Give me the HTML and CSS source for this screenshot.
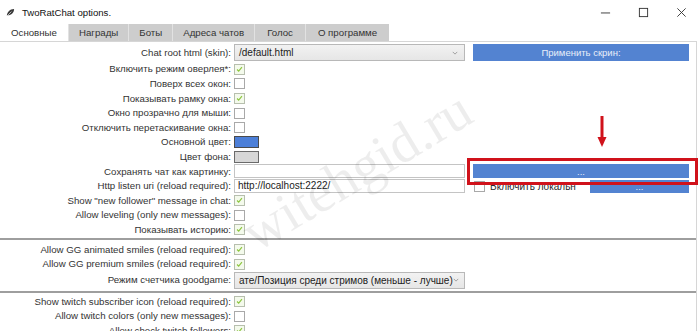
FILE: index.html
```html
<!DOCTYPE html>
<html lang="ru">
<head>
<meta charset="utf-8">
<title>TwoRatChat options.</title>
<link rel="stylesheet" href="styles.css">
</head>
<body>
<div class="window">
  <header class="titlebar">
    <svg class="app-icon" viewBox="0 0 10 10"><path d="M1 9 C1 5 4 1 9 1 C9 5 6 8 2 8 Z" fill="#3a3a3a"/><path d="M1 9 L6 4" stroke="#fff" stroke-width="0.7"/></svg>
    <span class="title">TwoRatChat options.</span>
    <div class="controls">
      <span class="ctl"><svg viewBox="0 0 12 12"><path d="M1 6.5 H11" stroke="#333" stroke-width="1"/></svg></span>
      <span class="ctl"><svg viewBox="0 0 12 12"><rect x="1.5" y="1.5" width="9" height="9" fill="none" stroke="#333" stroke-width="1"/></svg></span>
      <span class="ctl"><svg viewBox="0 0 12 12"><path d="M1.5 1.5 L10.5 10.5 M10.5 1.5 L1.5 10.5" stroke="#333" stroke-width="1"/></svg></span>
    </div>
  </header>

  <nav class="tabs">
    <div class="tab active">Основные</div>
    <div class="tab">Награды</div>
    <div class="tab">Боты</div>
    <div class="tab">Адреса чатов</div>
    <div class="tab tab-wide">Голос</div>
    <div class="tab tab-wide">О программе</div>
  </nav>

  <main class="panel">
    <div class="row tall">
      <span class="lbl">Chat root html (skin):</span>
      <div class="select"><span class="sel-text">/default.html</span><svg class="chev" viewBox="0 0 8 5"><path d="M1 1 L4 4 L7 1" fill="none" stroke="#888" stroke-width="1"/></svg></div>
      <div class="side"><span class="btn full">Применить скрин:</span></div>
    </div>
    <div class="row"><span class="lbl">Включить режим оверлея*:</span><span class="cb on"><svg viewBox="0 0 11 11"><path d="M2.5 5.5 L4.5 7.5 L8.5 2.5" fill="none" stroke="#8cc63f" stroke-width="1.4"/></svg></span></div>
    <div class="row"><span class="lbl">Поверх всех окон:</span><span class="cb"></span></div>
    <div class="row"><span class="lbl">Показывать рамку окна:</span><span class="cb on"><svg viewBox="0 0 11 11"><path d="M2.5 5.5 L4.5 7.5 L8.5 2.5" fill="none" stroke="#8cc63f" stroke-width="1.4"/></svg></span></div>
    <div class="row"><span class="lbl">Окно прозрачно для мыши:</span><span class="cb"></span></div>
    <div class="row"><span class="lbl">Отключить перетаскивание окна:</span><span class="cb"></span></div>
    <div class="row"><span class="lbl">Основной цвет:</span><span class="swatch blue"></span></div>
    <div class="row"><span class="lbl">Цвет фона:</span><span class="swatch gray"></span></div>
    <div class="row"><span class="lbl">Сохранять чат как картинку:</span><span class="input"></span>
      <div class="side"><span class="btn full slim">...</span></div>
    </div>
    <div class="row"><span class="lbl">Http listen uri (reload required):</span><span class="input">http://localhost:2222/</span>
      <div class="side local"><span class="cb"></span><span class="local-text">Включить локальн</span><span class="btn small">...</span></div>
    </div>
    <div class="row"><span class="lbl">Show "new follower" message in chat:</span><span class="cb on"><svg viewBox="0 0 11 11"><path d="M2.5 5.5 L4.5 7.5 L8.5 2.5" fill="none" stroke="#8cc63f" stroke-width="1.4"/></svg></span></div>
    <div class="row"><span class="lbl">Allow leveling (only new messages):</span><span class="cb"></span></div>
    <div class="row"><span class="lbl">Показывать историю:</span><span class="cb on"><svg viewBox="0 0 11 11"><path d="M2.5 5.5 L4.5 7.5 L8.5 2.5" fill="none" stroke="#8cc63f" stroke-width="1.4"/></svg></span></div>

    <div class="sep sep-a"></div>

    <div class="row"><span class="lbl">Allow GG animated smiles (reload required):</span><span class="cb on"><svg viewBox="0 0 11 11"><path d="M2.5 5.5 L4.5 7.5 L8.5 2.5" fill="none" stroke="#8cc63f" stroke-width="1.4"/></svg></span></div>
    <div class="row"><span class="lbl">Allow GG premium smiles (reload required):</span><span class="cb on"><svg viewBox="0 0 11 11"><path d="M2.5 5.5 L4.5 7.5 L8.5 2.5" fill="none" stroke="#8cc63f" stroke-width="1.4"/></svg></span></div>
    <div class="row tall2">
      <span class="lbl">Режим счетчика goodgame:</span>
      <div class="select"><span class="sel-text">ате/Позиция среди стримов (меньше - лучше)</span><svg class="chev" viewBox="0 0 8 5"><path d="M1 1 L4 4 L7 1" fill="none" stroke="#888" stroke-width="1"/></svg></div>
    </div>

    <div class="sep sep-b"></div>

    <div class="row"><span class="lbl">Show twitch subscriber icon (reload required):</span><span class="cb on"><svg viewBox="0 0 11 11"><path d="M2.5 5.5 L4.5 7.5 L8.5 2.5" fill="none" stroke="#8cc63f" stroke-width="1.4"/></svg></span></div>
    <div class="row"><span class="lbl">Allow twitch colors (only new messages):</span><span class="cb"></span></div>
    <div class="row"><span class="lbl">Allow check twitch followers:</span><span class="cb on"><svg viewBox="0 0 11 11"><path d="M2.5 5.5 L4.5 7.5 L8.5 2.5" fill="none" stroke="#8cc63f" stroke-width="1.4"/></svg></span></div>
  </main>
</div>

<div class="watermark">witehgid.ru</div>
<div class="highlight"></div>
<svg class="arrow" viewBox="0 0 10 32"><path d="M5 0 V22" stroke="#d0121b" stroke-width="3"/><path d="M0.5 21 L9.5 21 L5 31 Z" fill="#d0121b"/></svg>
</body>
</html>
```

FILE: styles.css
```css
* { box-sizing: border-box; margin: 0; padding: 0; }

html, body {
  width: 700px;
  height: 331px;
  overflow: hidden;
  background: #fff;
}

body {
  position: relative;
  font-family: "Liberation Sans", Arial, sans-serif;
  font-size: 9.7px;
  color: #333;
}

.titlebar {
  height: 24px;
  display: flex;
  align-items: center;
  padding-left: 6px;
}

.app-icon { width: 9px; height: 9px; margin-right: 7px; }

.title { font-size: 9.6px; color: #111; }

.controls { margin-left: auto; display: flex; }

.ctl {
  width: 38px;
  height: 24px;
  display: flex;
  align-items: center;
  justify-content: center;
}

.ctl svg { width: 11px; height: 11px; }

.tabs {
  height: 17px;
  display: flex;
  align-items: stretch;
}

.tab {
  display: flex;
  align-items: center;
  padding: 0 10px;
  background: #cdcdcd;
  border-left: 1px solid #e2e2e2;
  color: #333;
}

.tab.active { background: #fff; border-left: none; padding: 0 11px; }
.tab.tab-wide { padding: 0 12px; }

.panel {
  width: 697px;
  border-top: 1px solid #d6d6d6;
  border-right: 1px solid #d6d6d6;
  padding-top: 1px;
  height: 290px;
}

.row {
  display: grid;
  grid-template-columns: 234px 231px 1fr;
  height: 14.6px;
  align-items: center;
}

.row.tall { height: 19px; }
.row.tall2 { height: 18px; }

.lbl {
  text-align: right;
  padding-right: 3px;
  white-space: nowrap;
  line-height: 1;
  color: #333;
}

.cb {
  width: 11px;
  height: 11px;
  border: 1px solid #a9a9a9;
  background: #fff;
  display: block;
}

.cb.on { background: #f4faec; border-color: #b7bfae; }
.cb svg { width: 9px; height: 9px; display: block; }

.swatch {
  width: 25px;
  height: 12px;
  border: 1px solid #4a4a4a;
}
.swatch.blue { background: #4c7fd8; }
.swatch.gray { background: #d7d7d7; border-color: #6a6a6a; }

.input {
  height: 14px;
  border: 1px solid #c4c4c4;
  background: #fff;
  padding-left: 3px;
  line-height: 12px;
  white-space: nowrap;
  color: #222;
  font-size: 10px;
}

.select {
  height: 17px;
  border: 1px solid #b8b8b8;
  background: linear-gradient(#f2f2f2, #e6e6e6);
  display: flex;
  align-items: center;
  padding: 0 6px 0 4px;
  color: #222;
  font-size: 10px;
  overflow: hidden;
}

.sel-text { white-space: nowrap; flex: 1; }
.chev { width: 6px; height: 4px; flex: none; }

.side { padding-left: 8px; padding-right: 7px; }

.btn {
  display: flex;
  align-items: center;
  justify-content: center;
  background: #5383d1;
  color: #e8eef9;
  font-size: 9.5px;
}

.btn.full { height: 17px; }
.btn.slim { height: 14px; }

.local {
  display: flex;
  align-items: center;
  height: 14px;
}

.local .cb { margin-left: 1px; flex: none; }

.local-text {
  margin-left: 5px;
  flex: 1;
  white-space: nowrap;
  color: #2a2a2a;
  font-size: 10px;
}

.btn.small { width: 99px; height: 13px; flex: none; }

.sep { height: 2px; background: #9e9e9e; }
.sep-a { margin: 1px 0 2px; }
.sep-b { margin: 2px 0 1px; }

.watermark {
  position: absolute;
  left: 255px;
  top: 206px;
  font-family: "Liberation Serif", serif;
  font-size: 56px;
  line-height: 1;
  color: rgba(0, 0, 0, 0.07);
  transform: rotate(-31deg);
  transform-origin: 0 80%;
  white-space: nowrap;
  pointer-events: none;
}

.highlight {
  position: absolute;
  left: 467px;
  top: 158px;
  width: 231px;
  height: 27px;
  border: 3px solid #d0121b;
}

.arrow {
  position: absolute;
  left: 597px;
  top: 116px;
  width: 10px;
  height: 32px;
}
```
